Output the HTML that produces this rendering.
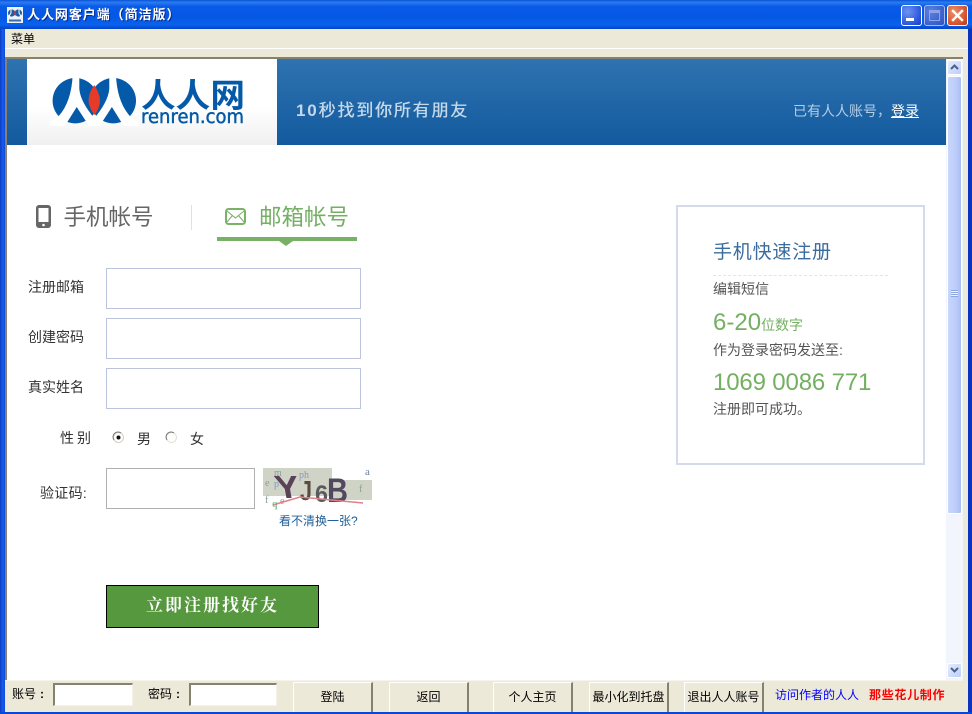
<!DOCTYPE html>
<html><head><meta charset="utf-8">
<style>
*{box-sizing:border-box;margin:0;padding:0}
html,body{width:972px;height:714px;overflow:hidden;background:#ECE9D8}
body{position:relative;font-family:"Liberation Sans","WenQuanYi Zen Hei","Noto Sans CJK SC",sans-serif;font-size:13px;color:#333}
.a{position:absolute;white-space:nowrap}
.inp{position:absolute;background:#fff;border:1px solid #bcc3dc}
.btn{position:absolute;top:682px;height:30px;background:#ECE9D8;border-top:1px solid #fff;border-left:1px solid #fff;border-right:2px solid #85826f;text-align:center;font-size:12px;line-height:28px;color:#000;white-space:nowrap}
.cell{position:absolute;top:683px;height:23px;background:#fff;border-top:2px solid #85826f;border-left:2px solid #85826f;border-right:1px solid #f4f2e8;border-bottom:1px solid #f4f2e8}
.wb{position:absolute;top:5px;width:21px;height:21px;border:1px solid #fff;border-radius:3px}
</style></head><body>

<!-- title bar -->
<div class="a" style="left:0;top:0;width:972px;height:29px;background:linear-gradient(#0a53d8 0,#2a7cf0 8%,#0a5ae8 22%,#0458e4 60%,#0a62ee 85%,#0444c8 100%)"></div>
<div class="a" style="left:0;top:29px;width:5px;height:685px;background:linear-gradient(90deg,#0a3ec0,#1a5cf0 60%,#0c48d8)"></div>
<div class="a" style="left:968px;top:29px;width:4px;height:685px;background:#0a34c0"></div>

<svg class="a" style="left:7px;top:7px" width="16" height="16" viewBox="0 0 16 16"><rect width="16" height="16" fill="#eef2f8"/><circle cx="4.6" cy="6" r="3.6" fill="#1a5ca8"/><circle cx="11.4" cy="6" r="3.6" fill="#1a5ca8"/><path d="M4 2V6L1.5 10M12 2V6L14.5 10" stroke="#fff" fill="none"/><path d="M8 3Q9.4 6 8 9Q6.6 6 8 3Z" fill="#e0392b"/><path d="M2 12.5H14V14.5H2Z" fill="#3a6ea8"/></svg>
<div class="a" style="left:27px;top:7px;color:#fff;font-size:13px;font-weight:bold;line-height:16px;text-shadow:1px 1px 0 #0a2a88;letter-spacing:.95px">人人网客户端（简洁版）</div>

<!-- window buttons -->
<div class="wb" style="left:901px;background:radial-gradient(circle at 30% 30%,#6c94f0,#2a55dc 70%,#1c3cc0)"><div class="a" style="left:4px;top:12px;width:8px;height:3px;background:#fff"></div></div>
<div class="wb" style="left:924px;border-color:#a8bcec;background:radial-gradient(circle at 30% 30%,#5c80e0,#3a60cc 70%,#3054c4)"><div class="a" style="left:4px;top:4px;width:11px;height:11px;border:1px solid #8ca4e4;border-top:3px solid #8ca4e4"></div></div>
<div class="wb" style="left:947px;background:radial-gradient(circle at 30% 30%,#e8906c,#d8542c 65%,#b83a14)">
<svg class="a" style="left:3px;top:3px" width="13" height="13" viewBox="0 0 13 13"><path d="M2 2L11 11M11 2L2 11" stroke="#fff" stroke-width="2.4" stroke-linecap="square"/></svg></div>

<!-- menu -->
<div class="a" style="left:5px;top:29px;width:963px;height:19px;background:#ECE9D8"></div>
<div class="a" style="left:11px;top:31px;font-size:12px;line-height:16px;color:#000">菜单</div>
<div class="a" style="left:5px;top:48px;width:963px;height:1px;background:#fff"></div>
<div class="a" style="left:5px;top:49px;width:963px;height:8px;background:#ECE9D8"></div>
<div class="a" style="left:5px;top:57px;width:958px;height:2px;background:#85826f"></div>
<div class="a" style="left:5px;top:57px;width:2px;height:623px;background:#85826f"></div>

<!-- content -->
<div class="a" style="left:7px;top:59px;width:939px;height:621px;background:#fff"></div>
<div class="a" style="left:7px;top:59px;width:939px;height:86px;background:linear-gradient(#2f73b0,#125a9e)"></div>
<div class="a" style="left:27px;top:59px;width:250px;height:86px;background:linear-gradient(#fff 55%,#f0f0f0)"></div>

<!-- logo -->
<svg class="a" style="left:50px;top:74px" width="198" height="54" viewBox="0 0 198 54">
<defs><clipPath id="c"><rect x="0" y="0" width="90" height="52"/></clipPath></defs>
<g clip-path="url(#c)">
<circle cx="25.3" cy="26.7" r="22.7" fill="#045aa8"/>
<circle cx="63.3" cy="26.7" r="22.7" fill="#045aa8"/>
<path d="M22.7 0H29.3V15Q30.5 28 45 45V55H41L26.7 33L13 55H0V48L8.3 42.5Q21.7 28 22.7 0Z" fill="#fff"/>
<path d="M65.9 0H59.3V15Q58.1 28 43.6 45V55H47.6L61.9 33L75.6 55H88.6V48L80.3 42.5Q66.9 28 65.9 0Z" fill="#fff"/>
<path d="M44.3 11Q50 20 50 27Q49.5 35 44.3 41Q38.8 33 38.5 27Q38.5 19 44.3 11Z" fill="#e63b28"/>
</g>
<text x="91" y="33" font-size="33" font-weight="bold" fill="#045aa8" font-family="'WenQuanYi Zen Hei','Noto Sans CJK SC',sans-serif" textLength="104" lengthAdjust="spacingAndGlyphs">人人网</text>
<text x="91" y="49" font-size="19" fill="#045aa8" stroke="#045aa8" stroke-width=".5" font-family="'DejaVu Sans',sans-serif" textLength="103" lengthAdjust="spacingAndGlyphs">renren.com</text>
</svg>

<div class="a" style="left:296px;top:100px;font-size:17px;line-height:22px;color:#c4d8ea;font-weight:bold;letter-spacing:1.8px">10<span style="font-weight:normal;text-shadow:.4px 0 0 #c4d8ea">秒找到你所有朋友</span></div>
<div class="a" style="left:793px;top:102px;font-size:14px;line-height:18px;color:#b4cee6">已有人人账号，<span style="color:#fff;text-decoration:underline">登录</span></div>

<!-- tabs -->
<svg class="a" style="left:36px;top:205px" width="15" height="23" viewBox="0 0 15 23"><rect x="0" y="0" width="15" height="23" rx="3" fill="#666"/><rect x="2.5" y="3" width="10" height="14" fill="#fff"/><circle cx="7.5" cy="20" r="1.3" fill="#fff"/></svg>
<div class="a" style="left:63.5px;top:204px;font-size:22.5px;line-height:27px;color:#666">手机帐号</div>
<div class="a" style="left:191px;top:205px;width:1px;height:25px;background:#e0e0e0"></div>
<svg class="a" style="left:225px;top:208px" width="21" height="17" viewBox="0 0 21 17"><rect x="1" y="1" width="19" height="15" rx="2.5" fill="none" stroke="#7cb268" stroke-width="2"/><path d="M2 3L10.5 10L19 3M2 14L7.5 7.5M19 14L13.5 7.5" fill="none" stroke="#7cb268" stroke-width="1.1"/></svg>
<div class="a" style="left:259px;top:204px;font-size:22.5px;line-height:27px;color:#74b062">邮箱帐号</div>
<div class="a" style="left:217px;top:237px;width:140px;height:4px;background:#78b065"></div>
<div class="a" style="left:279px;top:241px;width:0;height:0;border-left:7px solid transparent;border-right:7px solid transparent;border-top:5px solid #78b065"></div>

<!-- form -->
<div class="a" style="left:28px;top:278px;font-size:14px;line-height:18px">注册邮箱</div>
<div class="inp" style="left:106px;top:268px;width:255px;height:41px"></div>
<div class="a" style="left:28px;top:328px;font-size:14px;line-height:18px">创建密码</div>
<div class="inp" style="left:106px;top:318px;width:255px;height:41px"></div>
<div class="a" style="left:28px;top:378px;font-size:14px;line-height:18px">真实姓名</div>
<div class="inp" style="left:106px;top:368px;width:255px;height:41px"></div>

<div class="a" style="left:60px;top:429px;font-size:14px;line-height:18px;letter-spacing:3px">性别</div>
<svg class="a" style="left:112px;top:431px" width="13" height="13" viewBox="0 0 13 13"><circle cx="6.5" cy="6.5" r="5" fill="#fff" stroke="#d4d0c4"/><path d="M2 9A5 5 0 0 1 9 2" fill="none" stroke="#777" stroke-width="1"/><circle cx="6.5" cy="6.5" r="2" fill="#111"/></svg>
<div class="a" style="left:137px;top:430px;font-size:14px;line-height:18px">男</div>
<svg class="a" style="left:165px;top:431px" width="13" height="13" viewBox="0 0 13 13"><circle cx="6.5" cy="6.5" r="5" fill="#fff" stroke="#e4e0d4"/><path d="M2 9A5 5 0 0 1 9 2" fill="none" stroke="#777" stroke-width="1"/></svg>
<div class="a" style="left:190px;top:430px;font-size:14px;line-height:18px">女</div>

<div class="a" style="left:40px;top:484px;font-size:14px;line-height:18px;letter-spacing:.3px">验证码:</div>
<div class="inp" style="left:106px;top:468px;width:149px;height:41px;border-color:#b0b0b0"></div>

<!-- captcha -->
<svg class="a" style="left:263px;top:466px" width="110" height="44" viewBox="0 0 110 44">
<rect x="0" y="2" width="69" height="28" fill="#d0d4c6"/>
<rect x="69" y="14" width="40" height="20" fill="#d0d4c6"/>
<g font-family="'Liberation Serif',serif" font-size="10" fill="#8aa09a"><text x="11" y="10">m</text><text x="2" y="20">e</text><text x="11" y="21" fill="#7a9ac0">p</text><text x="2" y="37">f</text><text x="9" y="41" fill="#80c8a0" font-weight="bold">q</text><text x="17" y="38" fill="#88a0a0">e</text><text x="102" y="9" fill="#7080a0" font-size="11">a</text><text x="96" y="26">f</text><text x="36" y="12" fill="#9a90b8">ph</text></g>
<text transform="translate(14,32) skewX(10)" font-family="'Liberation Sans',sans-serif" font-weight="bold" font-size="32" fill="#5a4258" textLength="24" lengthAdjust="spacingAndGlyphs">Y</text>
<text transform="translate(37,34)" font-family="'Liberation Sans',sans-serif" font-weight="bold" font-size="28" fill="#5a4a40" textLength="12" lengthAdjust="spacingAndGlyphs">J</text>
<text transform="translate(52,36)" font-family="'Liberation Sans',sans-serif" font-weight="bold" font-size="24" fill="#5a5a5c" textLength="13" lengthAdjust="spacingAndGlyphs">6</text>
<text transform="translate(64,36)" font-family="'Liberation Sans',sans-serif" font-weight="bold" font-size="34" fill="#524860" textLength="21" lengthAdjust="spacingAndGlyphs">B</text>
<path d="M10 39L37 31L100 37" fill="none" stroke="#e08088" stroke-width="1.5"/>
</svg>
<div class="a" style="left:279px;top:514px;font-size:12px;line-height:15px;color:#1e6098">看不清换一张?</div>

<!-- submit -->
<div class="a" style="left:106px;top:585px;width:213px;height:43px;background:#55983d;border:1px solid #000;color:#fff;font-size:17px;line-height:36px;text-align:center;letter-spacing:2px;font-weight:bold;font-family:'Noto Serif CJK SC','Liberation Serif',serif">立即注册找好友</div>

<!-- side panel -->
<div class="a" style="left:676px;top:205px;width:249px;height:260px;border:2px solid #d4daea;background:#fff"></div>
<div class="a" style="left:713px;top:242px;font-size:19px;line-height:22px;color:#3a6c9e;letter-spacing:.8px">手机快速注册</div>
<div class="a" style="left:713px;top:275px;width:175px;border-top:1px dashed #e4e4e4"></div>
<div class="a" style="left:713px;top:281px;font-size:14px;line-height:17px;color:#555">编辑短信</div>
<div class="a" style="left:713px;top:309px;font-size:24px;line-height:28px;color:#74b062">6-20<span style="font-size:14px">位数字</span></div>
<div class="a" style="left:713px;top:342px;font-size:14px;line-height:17px;color:#555">作为登录密码发送至:</div>
<div class="a" style="left:713px;top:369px;font-size:24px;line-height:28px;color:#74b062;letter-spacing:-.15px">1069 0086 771</div>
<div class="a" style="left:713px;top:401px;font-size:14px;line-height:17px;color:#555">注册即可成功。</div>

<!-- scrollbar -->
<div class="a" style="left:946px;top:59px;width:17px;height:621px;background:#f3f5fd"></div>
<div class="a" style="left:947px;top:60px;width:15px;height:15px;background:linear-gradient(135deg,#e4ecfe,#bccdf8);border:1px solid #fff;border-radius:2px"></div>
<svg class="a" style="left:950px;top:64px" width="9" height="6" viewBox="0 0 9 6"><path d="M1 5L4.5 1.5L8 5" fill="none" stroke="#4d6185" stroke-width="2"/></svg>
<div class="a" style="left:947px;top:76px;width:15px;height:438px;background:linear-gradient(90deg,#c8d6fb,#bccdfa 60%,#aabef4);border:1px solid #fff;border-radius:2px"></div>
<div class="a" style="left:951px;top:290px;width:7px;height:7px;background:repeating-linear-gradient(#8ea6e4 0 1px,#eef2fe 1px 2px)"></div>
<div class="a" style="left:947px;top:663px;width:15px;height:15px;background:linear-gradient(135deg,#e4ecfe,#bccdf8);border:1px solid #fff;border-radius:2px"></div>
<svg class="a" style="left:950px;top:667px" width="9" height="6" viewBox="0 0 9 6"><path d="M1 1L4.5 4.5L8 1" fill="none" stroke="#4d6185" stroke-width="2"/></svg>

<!-- bottom bar -->
<div class="a" style="left:5px;top:680px;width:963px;height:32px;background:#ECE9D8"></div>
<div class="a" style="left:5px;top:680px;width:958px;height:1px;background:#f6f4ea"></div>
<div class="a" style="left:12px;top:686px;font-size:12px;line-height:16px;color:#000">账号</div>
<div class="a" style="left:40px;top:686px;font-size:12px;line-height:16px;color:#000;font-weight:bold">:</div>
<div class="cell" style="left:53px;width:80px"></div>
<div class="a" style="left:148px;top:686px;font-size:12px;line-height:16px;color:#000">密码</div>
<div class="a" style="left:176px;top:686px;font-size:12px;line-height:16px;color:#000;font-weight:bold">:</div>
<div class="cell" style="left:189px;width:88px"></div>
<div class="btn" style="left:293px;width:80px">登陆</div>
<div class="btn" style="left:389px;width:80px">返回</div>
<div class="btn" style="left:493px;width:80px">个人主页</div>
<div class="btn" style="left:589px;width:80px">最小化到托盘</div>
<div class="btn" style="left:684px;width:80px">退出人人账号</div>
<div class="a" style="left:775px;top:688px;font-size:12px;line-height:15px;color:#0000ff">访问作者的人人</div>
<div class="a" style="left:869px;top:688px;font-size:12px;line-height:15px;color:#ff0000;font-weight:bold;letter-spacing:.7px">那些花儿制作</div>
<div class="a" style="left:0;top:712px;width:972px;height:2px;background:#0a46d8"></div>

</body></html>
